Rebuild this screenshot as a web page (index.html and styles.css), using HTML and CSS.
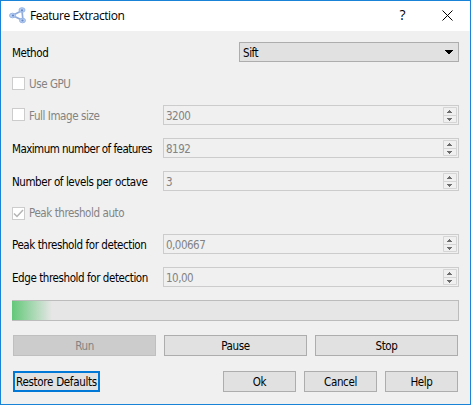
FILE: index.html
```html
<!DOCTYPE html>
<html lang="en">
<head>
<meta charset="utf-8">
<title>Feature Extraction</title>
<link rel="stylesheet" href="styles.css">
</head>
<body>
<svg class="defs" width="0" height="0">
  <symbol id="spin" viewBox="0 0 14 16">
    <path d="M.5 .5h13v15H.5zM.5 8.500h13" fill="none" stroke="#d5d5d5"/>
    <path d="M6 3h1v1h1v1h1v1H4V5h1V4h1zM4 11h5v1H8v1H7v1H6v-1H5v-1H4z" fill="#6d6d6d"/>
  </symbol>
</svg>
<div class="dialog">
  <header class="titlebar">
    <svg class="logo" width="18" height="18" viewBox="0 0 18 18">
      <path d="M3.500 8.500L13 3.500L14 13.500Z" fill="none" stroke="#8eabdc" stroke-width="1.700"/>
      <g fill="#b5cdf3" stroke="#9ab7e5"><ellipse cx="3.500" cy="8.500" rx="3" ry="2.300"/><ellipse cx="13" cy="3" rx="3" ry="2.300"/><ellipse cx="13.500" cy="13.500" rx="3" ry="2.300"/></g>
      <g fill="#6587c3"><circle cx="4" cy="8.500" r="1.100"/><circle cx="13" cy="3.300" r="1.100"/><circle cx="13.500" cy="13.500" r="1.100"/></g>
    </svg>
    <h1>Feature Extraction</h1>
    <span class="question">?</span>
    <svg class="close" width="11" height="11" viewBox="0 0 11 11"><path d="M.5 .5l10 10M10.500 .5l-10 10" stroke="#000" fill="none"/></svg>
  </header>
  <main>
    <div class="row method"><label>Method</label><div class="combo"><span>Sift</span><svg width="8" height="4" viewBox="0 0 8 4"><path d="M0 0h8v1H7v1H6v1H5v1H3V3H2V2H1V1H0z"/></svg></div></div>
    <div class="row gpu off"><i class="box"></i><label>Use GPU</label></div>
    <div class="row size off"><i class="box"></i><label>Full Image size</label><div class="field"><span>3200</span><svg width="14" height="16"><use href="#spin"/></svg></div></div>
    <div class="row"><label class="maximum">Maximum number of features</label><div class="field"><span>8192</span><svg width="14" height="16"><use href="#spin"/></svg></div></div>
    <div class="row"><label class="levels">Number of levels per octave</label><div class="field"><span>3</span><svg width="14" height="16"><use href="#spin"/></svg></div></div>
    <div class="row auto off"><i class="box"><svg width="11" height="11" viewBox="0 0 11 11"><path d="M1 5.500l3 3l6-6.500" fill="none" stroke="#b4b4b4" stroke-width="1.500"/></svg></i><label>Peak threshold auto</label></div>
    <div class="row"><label class="peak">Peak threshold for detection</label><div class="field"><span>0,00667</span><svg width="14" height="16"><use href="#spin"/></svg></div></div>
    <div class="row"><label class="edge">Edge threshold for detection</label><div class="field"><span>10,00</span><svg width="14" height="16"><use href="#spin"/></svg></div></div>
    <div class="progress"><div class="chunk"></div></div>
    <div class="actions"><button disabled>Run</button><button>Pause</button><button>Stop</button></div>
    <div class="footer"><button class="restore">Restore Defaults</button><button>Ok</button><button>Cancel</button><button>Help</button></div>
  </main>
</div>
</body>
</html>
```
FILE: styles.css
```css
* { box-sizing: border-box; }
body { margin: 0; font: 11.5px/18px "DejaVu Sans Condensed", "DejaVu Sans", sans-serif; font-stretch: condensed; letter-spacing: -0.42px; color: #000; }
.defs { position: absolute; }
.dialog { width: 471px; height: 405px; border: 1px solid #1883d7; background: #f0f0f0; overflow: hidden; }
.titlebar { height: 30px; background: #fff; display: flex; align-items: center; padding: 0 17px 0 8px; }
.logo { margin-top: -1px; }
h1 { margin: 0 auto 0 3px; font: 12px/18px "Open Sans", sans-serif; letter-spacing: -0.45px; }
.question { font: 14px/18px "Open Sans", sans-serif; margin: -2px 37px 0 0; }
.close { margin-top: -2px; }
main { padding: 11px 11px 0; }
.row { height: 20px; margin-bottom: 13px; display: flex; align-items: center; justify-content: space-between; white-space: nowrap; }
.row label { padding-top: 2px; }
.off { color: #838383; }
.row.off label { margin-left: 4px; margin-right: auto; }
.row.gpu label { padding-top: 0; }
.method { margin-bottom: 12px; }
.gpu { margin-bottom: 11px; }
.auto { margin: -2px 0 12px; }
.gpu .box, .size .box { position: relative; top: -1px; }
.auto .box { position: relative; top: 1px; }
.maximum { letter-spacing: -0.54px; }
.combo { width: 220px; height: 20px; border: 1px solid #adadad; background: #e1e1e1; display: flex; align-items: center; justify-content: space-between; padding: 0 5px 0 3px; }
.combo span { padding-top: 2px; }
.combo svg { display: block; }
.field { width: 296px; height: 20px; border: 1px solid #ccc; color: #838383; display: flex; align-items: center; justify-content: space-between; padding: 0 1px 0 2px; }
.field span { padding-top: 2px; letter-spacing: -0.5px; }
.box { display: block; width: 13px; height: 13px; border: 1px solid #ccc; background: #fff; }
.box svg { display: block; }
.progress { height: 21px; border: 1px solid #bcbcbc; background: #e6e6e6; }
.chunk { width: 40px; height: 19px; margin-left: -1px; background: linear-gradient(90deg, #62c878, #e6e6e6); }
.actions, .footer { display: flex; gap: 8px; padding: 0 1px; }
.actions { margin: 14px 0 15px; }
button { height: 21px; width: 73px; padding: 1px 0 0; border: 1px solid #adadad; border-radius: 0; background: #e1e1e1; color: #000; font: inherit; letter-spacing: -0.35px; line-height: 18px; white-space: nowrap; }
.actions button { width: 143px; }
button:disabled { background: #ccc; border-color: #bfbfbf; color: #838383; }
.restore { width: 87px; border: 2px solid #0078d7; margin-right: auto; line-height: 16px; letter-spacing: -0.3px; }
```
